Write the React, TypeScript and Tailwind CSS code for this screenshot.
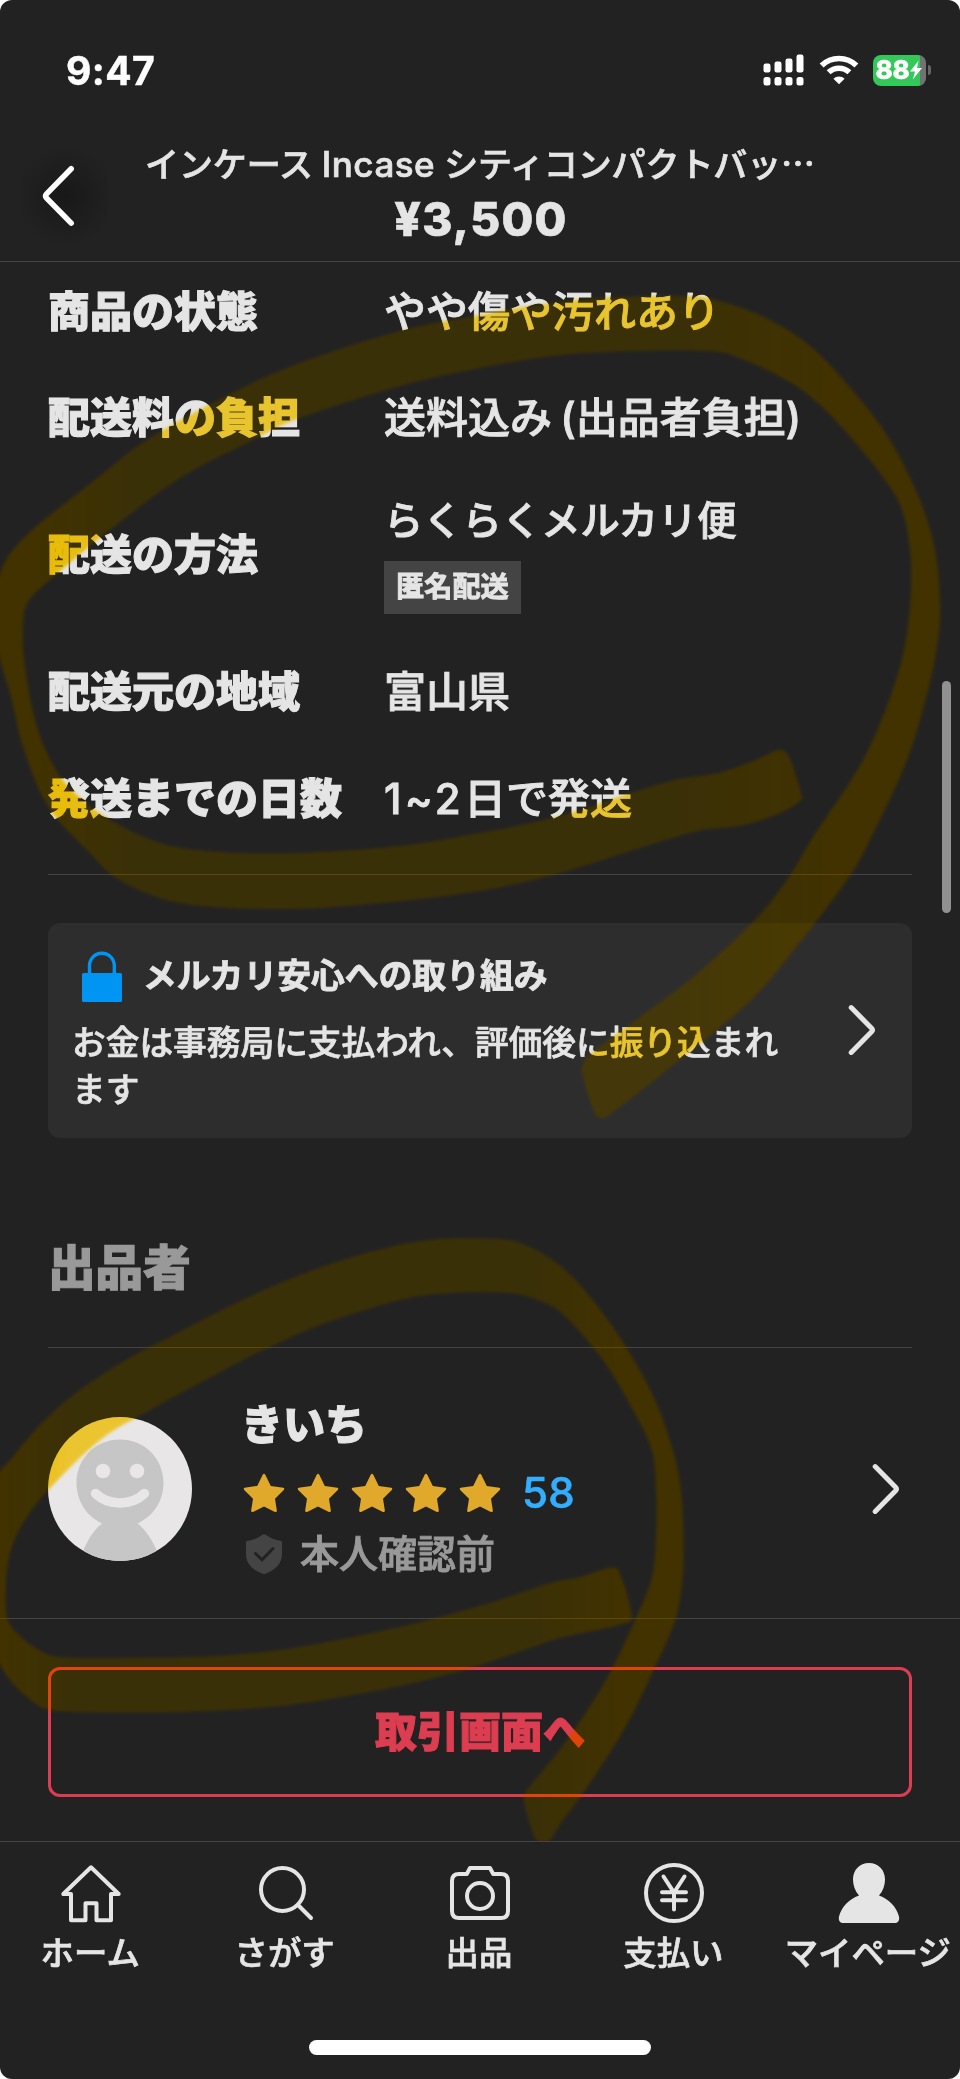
import React from 'react';

type Point = [number, number];

/** Closed smooth curve through every point (Catmull-Rom turned into cubic Béziers). */
function smooth(pts: Point[]): string {
  const n = pts.length;
  let d = `M${pts[0][0]} ${pts[0][1]}`;
  for (let i = 0; i < n; i++) {
    const a = pts[(i - 1 + n) % n];
    const b = pts[i];
    const c = pts[(i + 1) % n];
    const e = pts[(i + 2) % n];
    const f = (v: number) => v.toFixed(1);
    d += `C${f(b[0] + (c[0] - a[0]) / 6)} ${f(b[1] + (c[1] - a[1]) / 6)} ${f(c[0] - (e[0] - b[0]) / 6)} ${f(c[1] - (e[1] - b[1]) / 6)} ${c[0]} ${c[1]}`;
  }
  return d + 'Z';
}

const upperMarker = smooth([
  [778, 750], [760, 758], [722, 772], [680, 779], [640, 790], [560, 816], [480, 833], [400, 846], [300, 853],
  [220, 852], [160, 843], [107, 818], [77, 795], [56, 770], [37, 727], [25, 667], [23, 627], [28, 602],
  [52, 578], [110, 530], [180, 478], [253, 440], [300, 418], [400, 386], [480, 368], [560, 355], [635, 351],
  [710, 351], [742, 359], [790, 382], [820, 405], [853, 440], [885, 480], [903, 513], [911, 565], [908, 625],
  [895, 683], [863, 760], [813, 837], [787, 880], [752, 923], [693, 977], [640, 1017], [598, 1048], [583, 1064],
  [584, 1080], [594, 1111], [601, 1118], [613, 1112], [677, 1062], [750, 1001], [800, 942], [847, 880],
  [870, 840], [907, 760], [928, 690], [938, 640], [940, 602], [935, 550], [920, 500], [890, 440], [854, 392],
  [810, 346], [766, 318], [716, 300], [680, 296], [600, 298], [530, 306], [480, 315], [400, 331], [300, 363],
  [230, 394], [147, 440], [90, 484], [30, 532], [4, 564], [-5, 600], [-1, 653], [11, 697], [24, 750], [49, 808],
  [90, 853], [120, 880], [180, 903], [282, 909], [380, 903], [480, 891], [560, 873], [640, 848], [698, 831],
  [744, 825], [780, 813], [800, 801], [801, 793], [789, 757],
]);

const lowerMarker = smooth([
  [610, 1568], [580, 1577], [550, 1583], [514, 1595], [480, 1606], [400, 1627], [300, 1647], [220, 1656],
  [130, 1658], [60, 1657], [36, 1648], [17, 1633], [7, 1617], [6, 1585], [10, 1553], [23, 1523], [50, 1488],
  [100, 1440], [150, 1410], [243, 1360], [270, 1347], [320, 1325], [400, 1300], [450, 1293], [510, 1293],
  [540, 1301], [564, 1315], [603, 1360], [633, 1410], [652, 1451], [656, 1492], [656, 1535], [652, 1577],
  [635, 1620], [606, 1680], [567, 1740], [540, 1774], [525, 1793], [525, 1806], [533, 1833], [539, 1842],
  [549, 1841], [563, 1820], [588, 1786], [626, 1726], [654, 1669], [676, 1618], [683, 1572], [683, 1520],
  [680, 1483], [672, 1447], [656, 1402], [634, 1360], [610, 1323], [580, 1285], [554, 1261], [525, 1245],
  [497, 1239], [430, 1240], [370, 1252], [300, 1275], [230, 1306], [170, 1337], [126, 1360], [77, 1392],
  [40, 1425], [12, 1458], [-6, 1485], [-14, 1560], [-10, 1640], [0, 1664], [10, 1680], [27, 1697], [46, 1709],
  [80, 1712], [180, 1712], [280, 1706], [380, 1690], [442, 1676], [480, 1665], [530, 1648], [560, 1638],
  [592, 1631], [622, 1624], [632, 1616], [620, 1574],
]);

/** Yellow highlighter: one layer tints what is bright, the other lifts the dark background. */
function Highlighter() {
  return (
    <>
      <svg className="pointer-events-none absolute inset-0 z-10 h-[1841px] w-full mix-blend-multiply" viewBox="0 0 960 1841" aria-hidden="true">
        <defs>
          <filter id="soft" x="-5%" y="-5%" width="110%" height="110%">
            <feGaussianBlur stdDeviation="1.8" />
          </filter>
          <linearGradient id="tintA" gradientUnits="userSpaceOnUse" x1="0" x2="960" y1="0" y2="0">
            <stop offset="0.04" stopColor="#ffcf00" />
            <stop offset="0.14" stopColor="#ffdb3b" />
            <stop offset="0.7" stopColor="#ffdb3b" />
            <stop offset="0.86" stopColor="#ffcf00" />
          </linearGradient>
          <linearGradient id="tintB" gradientUnits="userSpaceOnUse" x1="0" x2="700" y1="0" y2="0">
            <stop offset="0.01" stopColor="#ffcf00" />
            <stop offset="0.1" stopColor="#ffdb3b" />
            <stop offset="0.76" stopColor="#ffdb3b" />
            <stop offset="0.88" stopColor="#ffcf00" />
          </linearGradient>
        </defs>
        <path d={upperMarker} fill="url(#tintA)" filter="url(#soft)" />
        <path d={lowerMarker} fill="url(#tintB)" filter="url(#soft)" />
      </svg>
      <svg className="pointer-events-none absolute inset-0 z-10 h-[1841px] w-full" viewBox="0 0 960 1841" aria-hidden="true">
        <defs>
          <linearGradient id="liftA" gradientUnits="userSpaceOnUse" x1="0" x2="960" y1="0" y2="0">
            <stop offset="0.04" stopColor="#ffb800" stopOpacity="0.14" />
            <stop offset="0.14" stopColor="#fcbf12" stopOpacity="0.11" />
            <stop offset="0.7" stopColor="#fcbf12" stopOpacity="0.11" />
            <stop offset="0.86" stopColor="#ffb800" stopOpacity="0.14" />
          </linearGradient>
          <linearGradient id="liftB" gradientUnits="userSpaceOnUse" x1="0" x2="700" y1="0" y2="0">
            <stop offset="0.01" stopColor="#ffb800" stopOpacity="0.14" />
            <stop offset="0.1" stopColor="#fcbf12" stopOpacity="0.11" />
            <stop offset="0.76" stopColor="#fcbf12" stopOpacity="0.11" />
            <stop offset="0.88" stopColor="#ffb800" stopOpacity="0.14" />
          </linearGradient>
        </defs>
        <path d={upperMarker} fill="url(#liftA)" filter="url(#soft)" />
        <path d={lowerMarker} fill="url(#liftB)" filter="url(#soft)" />
      </svg>
    </>
  );
}

function StatusBar() {
  return (
    <div className="flex h-[140px] items-center justify-between pl-[66px] pr-[29px] text-white">
      <span className="text-[39px] font-bold leading-none tracking-[0.4px] [-webkit-text-stroke:0.5px]">9:47</span>
      <div className="flex items-center gap-[14px]">
        <svg className="h-[32px] w-[42px]" viewBox="0 0 42 32" fill="currentColor" aria-hidden="true">
          <rect x="0.5" y="9.5" width="7" height="9" rx="2.2" />
          <rect x="11.5" y="7.5" width="7" height="11" rx="2.2" />
          <rect x="22.5" y="4.5" width="7" height="14" rx="2.2" />
          <rect x="33.5" y="0.5" width="7" height="18" rx="2.2" />
          <rect x="0.5" y="23" width="7" height="8.500" rx="2.5" />
          <rect x="11.5" y="23" width="7" height="8.500" rx="2.5" />
          <rect x="22.5" y="23" width="7" height="8.500" rx="2.5" />
          <rect x="33.5" y="23" width="7" height="8.500" rx="2.5" />
        </svg>
        <svg className="h-[30px] w-[40px]" viewBox="0 0 40 30" aria-hidden="true">
          <g fill="none" stroke="currentColor" strokeWidth="5.6">
            <path d="M2.6 10.6a25 25 0 0 1 34.8 0" />
            <path d="M9.6 17.3a15.2 15.2 0 0 1 20.8 0" />
          </g>
          <path d="M20 29.3l-5.6-5.6a8 8 0 0 1 11.2 0z" fill="currentColor" />
        </svg>
        <div className="flex items-center gap-[2px]">
          <div className="flex h-[31px] w-[53px] items-center overflow-hidden rounded-[8px] bg-gradient-to-r from-[#34c759] from-89% to-[#727272] to-89% pl-[2.5px]">
            <span className="text-[26px] font-extrabold leading-none tracking-[-0.2px] [-webkit-text-stroke:0.4px]">88</span>
            <svg className="-ml-px h-[20px] w-[14px] shrink-0" viewBox="0 0 14 20" aria-hidden="true">
              <path d="M9.6 0.5L1 11.5h5L3.8 19.5 13 8H8z" fill="currentColor" />
            </svg>
          </div>
          <div className="h-[10px] w-[3px] rounded-r-full bg-[#666]" />
        </div>
      </div>
    </div>
  );
}

function Header() {
  return (
    <header className="flex h-[122px] items-start border-b border-[#444]">
      <button type="button" aria-label="戻る" className="-mt-[5px] ml-[8px] h-[122px] w-[100px] shrink-0">
        <svg className="size-full" viewBox="0 0 100 122" fill="none">
          <defs>
            <radialGradient id="glow">
              <stop offset="0" stopColor="#181818" />
              <stop offset="1" stopColor="#222222" />
            </radialGradient>
          </defs>
          <circle cx="58" cy="61" r="50" fill="url(#glow)" />
          <path d="M63.2 33.800L38.600 58.900q-2 2.100 0 4.200l24.600 25" stroke="#fff" strokeWidth="5.6" strokeLinecap="round" />
        </svg>
      </button>
      <div className="-mt-[3px] flex flex-1 flex-col items-center pr-[108px] text-[#e5e5e5]">
        <h1 className="whitespace-nowrap text-[34px] font-medium leading-[52px] tracking-[-0.1px] [-webkit-text-stroke:0.7px]">
          インケース <span className="text-[35px] tracking-[0.5px]">Incase</span> シティコンパクトバッ
          <span className="font-['Noto_Sans_CJK_JP',sans-serif]">…</span>
        </h1>
        <p className="-mr-[2px] text-[46px] font-extrabold leading-[56px] tracking-[1.3px] [-webkit-text-stroke:0.6px]">¥3,500</p>
      </div>
    </header>
  );
}

function Row({ label, className, children }: { label: string; className: string; children: React.ReactNode }) {
  return (
    <div className={`flex items-center ${className}`}>
      <dt className="w-[336px] shrink-0 whitespace-nowrap font-extrabold [-webkit-text-stroke:1.1px]">{label}</dt>
      <dd className="whitespace-nowrap font-medium [-webkit-text-stroke:0.9px]">{children}</dd>
    </div>
  );
}

function ItemDetails() {
  return (
    <dl className="mx-12 border-b border-[#444] pb-[21px] pt-px text-[42px] leading-[48px]">
      <Row label="商品の状態" className="h-[102px] pb-1">やや傷や汚れあり</Row>
      <Row label="配送料の負担" className="h-[106px]">
        <span className="[word-spacing:-3px]">送料込み (出品者負担)</span>
      </Row>
      <Row label="配送の方法" className="h-[168px]">
        <div className="flex flex-col items-start gap-[18px] pt-[2px]">
          <span className="text-[39.3px] leading-[44px]">らくらくメルカリ便</span>
          <span className="flex h-[53px] items-center bg-[#444] px-[12px] text-[28.2px] font-bold leading-none">匿名配送</span>
        </div>
      </Row>
      <Row label="配送元の地域" className="h-[106px]">富山県</Row>
      <Row label="発送までの日数" className="h-[108px]">
        <span className="tracking-[3.300px]">1~2</span>日で発送
      </Row>
    </dl>
  );
}

function Chevron() {
  return (
    <svg className="h-[52px] w-[28px] shrink-0" viewBox="0 0 28 52" fill="none" aria-hidden="true">
      <path d="M3.2 3.6L23.6 24.2q1.7 1.8 0 3.6L3.2 48.4" stroke="#e5e5e5" strokeWidth="5" strokeLinecap="round" />
    </svg>
  );
}

function SafetyCard() {
  return (
    <section className="mx-12 mt-12 flex h-[215px] items-center justify-between rounded-[12px] bg-[#2d2d2d] pl-6 pr-[36px]">
      <div className="w-[720px] pt-[3px]">
        <div className="flex items-center gap-[19px]">
          <svg className="ml-[8px] h-[52px] w-[44px]" viewBox="0 0 44 52" aria-hidden="true">
            <path d="M9.5 24V14.6a12.400 12.400 0 0 1 24.800 0V24" fill="none" stroke="#0095f3" strokeWidth="3.4" />
            <rect x="2" y="22" width="40" height="29" rx="1.5" fill="#0095f3" />
          </svg>
          <h2 className="pb-[2px] text-[33.8px] font-bold leading-[48px] [-webkit-text-stroke:0.9px]">メルカリ安心への取り組み</h2>
        </div>
        <p className="mt-[16px] whitespace-nowrap text-[33.7px] font-medium leading-[47px] [-webkit-text-stroke:0.7px]">
          お金は事務局に支払われ、評価後に振り込まれ<br />ます
        </p>
      </div>
      <div className="pb-[2px]"><Chevron /></div>
    </section>
  );
}

function Avatar() {
  return (
    <svg className="size-[144px] shrink-0" viewBox="0 0 144 144" aria-hidden="true">
      <defs>
        <clipPath id="disc"><circle cx="72" cy="72" r="72" /></clipPath>
      </defs>
      <g clipPath="url(#disc)">
        <rect width="144" height="144" fill="#e9e6e7" />
        <path d="M72 22.5c24.5 0 43.5 19 43.5 43.5 0 18-10 33-26 40.5 8.5 6.5 15 17 19.5 27.500V144H35v-10c4.5-10.500 10.500-21 19-27.500C38.500 99 28.500 84 28.500 66c0-24.500 19-43.500 43.500-43.500z" fill="#c6c6c6" />
        <circle cx="55" cy="54" r="7.3" fill="#e9e6e7" />
        <circle cx="89" cy="54" r="7.3" fill="#e9e6e7" />
        <path d="M47.5 76.5C60.5 89 83.5 89 96.5 76.5" fill="none" stroke="#e9e6e7" strokeWidth="9.5" strokeLinecap="round" />
      </g>
    </svg>
  );
}

function Star() {
  return (
    <svg className="h-[40px] w-[42px]" viewBox="0 0 42 40" fill="#e0a92b" aria-hidden="true">
      <path d="M19.7 1.800q1.300-2 2.600 0l5.500 11.100 12.600 1.800q1.500.8.4 2.200l-8.800 8.800 1.900 12q-.3 1.800-2 1.200L21 33.600l-10.900 5.300q-1.700.6-2-1.200l1.900-12-8.800-8.800q-1.100-1.400.4-2.200l12.600-1.800z" />
    </svg>
  );
}

function Seller() {
  return (
    <section>
      <h2 className="mx-12 flex h-[210px] items-end border-b border-[#444] pb-[51px] text-[47.6px] font-extrabold leading-[56px] text-[#999] [-webkit-text-stroke:1.1px]">
        出品者
      </h2>
      <div className="flex h-[271px] items-center border-b border-[#444] pl-12 pr-[60px]">
        <div className="pt-[12px]"><Avatar /></div>
        <div className="ml-[51px] flex flex-1 flex-col pt-[13px]">
          <p className="-ml-[2px] text-[42px] font-extrabold leading-[60px] [-webkit-text-stroke:1.1px]">きいち</p>
          <div className="mt-[8px] flex h-[60px] items-center gap-[12px]">
            <Star /><Star /><Star /><Star /><Star />
            <span className="ml-[9px] text-[42px] font-medium leading-none tracking-[0.4px] text-[#33aeff] [-webkit-text-stroke:0.6px]">58</span>
          </div>
          <div className="mt-px flex h-[60px] items-center gap-[18px] pl-[3px]">
            <svg className="h-[40px] w-[36px]" viewBox="0 0 36 40" aria-hidden="true">
              <path d="M16.7.6q1.300-.8 2.600 0C24 4 29 6.500 34.500 6.800q1.500.1 1.500 1.600V20c0 10-7 16-16.700 19.700q-1.300.5-2.600 0C7 36 0 30 0 20V8.400Q0 6.900 1.500 6.800C7 6.500 12 4 16.700.6z" fill="#444" />
              <path d="M9.5 19.5l6.500 6.300L27 14.500" fill="none" stroke="#222" strokeWidth="3" strokeLinecap="round" />
            </svg>
            <span className="text-[39px] font-medium leading-[50px] text-[#999] [-webkit-text-stroke:0.9px]">本人確認前</span>
          </div>
        </div>
        <div className="pt-[12px]"><Chevron /></div>
      </div>
    </section>
  );
}

const tabs: { label: string; icon: React.ReactNode }[] = [
  { label: 'ホーム', icon: <path d="M30 4.3L2.3 31H10v26.3h14.5V40.2h11v17.1H50V31h7.7z" strokeLinejoin="round" /> },
  { label: 'さがす', icon: <g strokeLinecap="round"><circle cx="26.5" cy="26.5" r="21.5" /><path d="M42 42l13 13" /></g> },
  {
    label: '出品',
    icon: (
      <g strokeLinejoin="round">
        <path d="M20 5h20l3.200 6H51q7 0 7 7v30q0 7-7 7H9q-7 0-7-7V18q0-7 7-7h7.800z" />
        <circle cx="30" cy="33" r="13" />
      </g>
    ),
  },
  { label: '支払い', icon: <g strokeLinecap="round"><circle cx="30" cy="30" r="28" /><path d="M19.5 13.5L30 29.500l10.500-16M30 29.500V46.500M18 29.200h24M18 37.200h24" /></g> },
  {
    label: 'マイページ',
    icon: <path d="M30 0C39.5 0 46 7 46 16.500c0 5.500-2 11.500-6 16C50 36 57.500 44 60 53.500c.8 4-1 6.500-4 6.500H4c-3 0-4.800-2.500-4-6.500C2.500 44 10 36 20 32.500c-4-4.500-6-10.500-6-16C14 7 20.500 0 30 0z" fill="#e5e5e5" stroke="none" />,
  },
];

function TabBar() {
  return (
    <nav className="border-t border-[#444]">
      <div className="-mx-1.5 grid h-[198px] grid-cols-5 pt-[21px]">
        {tabs.map((t) => (
          <div key={t.label} className="flex flex-col items-center">
            <svg className="h-[60px] w-[60px] overflow-visible" viewBox="0 0 60 60" fill="none" stroke="#e5e5e5" strokeWidth="4" aria-hidden="true">
              {t.icon}
            </svg>
            <span className="-ml-[2px] mt-[8px] whitespace-nowrap text-[33.4px] font-medium leading-[45px] [-webkit-text-stroke:0.7px]">{t.label}</span>
          </div>
        ))}
      </div>
      <div className="mx-auto h-[15px] w-[342px] rounded-full bg-white" />
    </nav>
  );
}

export default function App() {
  return (
    <div className="h-[2079px] w-[960px] bg-white">
      <main
        lang="ja"
        className="relative isolate h-full overflow-hidden rounded-[12px] bg-[#222] font-['Inter','Noto_Sans_CJK_JP',sans-serif] text-[#e5e5e5]"
      >
        <StatusBar />
        <Header />
        <ItemDetails />
        <SafetyCard />
        <Seller />
        <div className="flex h-[222px] items-center px-12 pt-[4px]">
          <button type="button" className="h-[130px] w-full rounded-[12px] border-[3px] border-[#dc3d50] text-[42px] font-extrabold leading-none text-[#dc3d50] [-webkit-text-stroke:1.1px]">
            取引画面へ
          </button>
        </div>
        <TabBar />
        <div className="absolute right-[9px] top-[681px] h-[232px] w-[9px] rounded-full bg-[#919191]" />
        <Highlighter />
      </main>
    </div>
  );
}
